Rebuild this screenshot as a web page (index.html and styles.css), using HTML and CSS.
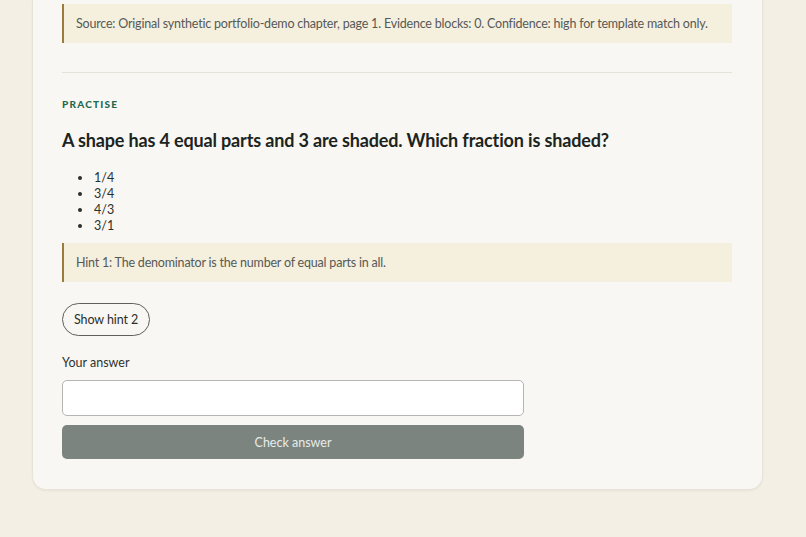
FILE: index.html
```html
<!DOCTYPE html>
<html lang="en">
<head>
<meta charset="utf-8">
<title>Practise</title>
<link rel="stylesheet" href="styles.css">
</head>
<body>
<main class="card">
  <div class="callout">Source: Original synthetic portfolio-demo chapter, page 1. Evidence blocks: 0. Confidence: high for template match only.</div>
  <hr class="divider">
  <section class="practise">
    <div class="eyebrow">PRACTISE</div>
    <h2 class="question">A shape has 4 equal parts and 3 are shaded. Which fraction is shaded?</h2>
    <ul class="options">
      <li>1/4</li>
      <li>3/4</li>
      <li>4/3</li>
      <li>3/1</li>
    </ul>
    <div class="callout hint">Hint 1: The denominator is the number of equal parts in all.</div>
    <button class="pill" type="button">Show hint 2</button>
    <label class="label" for="answer">Your answer</label>
    <input class="answer" id="answer" type="text">
    <button class="check" type="button">Check answer</button>
  </section>
</main>
</body>
</html>
```
FILE: styles.css
```css
* { box-sizing: border-box; }
html, body { margin: 0; padding: 0; }
body {
  background: #f3efe5;
  font-family: Lato, "Noto Sans", sans-serif;
  color: #1d2421;
  height: 537px;
  overflow: hidden;
}
.card {
  width: 731px;
  margin-left: 32px;
  background: #f9f7f3;
  border: 1px solid #e8e3d8;
  border-top: none;
  border-radius: 0 0 14px 14px;
  padding: 4px 30px 30px 29px;
  box-shadow: 0 1px 2px rgba(120, 100, 60, 0.08);
}
.callout {
  background: #f5efde;
  border-left: 2px solid #9c7b3e;
  padding: 10px 12px;
  font-size: 12.5px;
  letter-spacing: -0.2px;
  line-height: 19px;
  color: #565a57;
  white-space: nowrap;
}
.divider {
  border: none;
  border-top: 1px solid #e6e2da;
  margin: 29px 0 25px;
}
.eyebrow {
  font-size: 10px;
  font-weight: 900;
  letter-spacing: 1.2px;
  color: #1f6b50;
  line-height: 12px;
}
.question {
  font-size: 18px;
  letter-spacing: -0.15px;
  font-weight: 700;
  line-height: 26px;
  margin: 17px 0 17px;
  color: #1b2420;
}
.options {
  margin: 0 0 9px;
  padding-left: 31px;
  font-size: 12.5px;
  line-height: 16px;
  color: #2a2f2c;
}
.options li { padding-left: 1px; }
.hint { margin-bottom: 21px; }
.pill {
  display: block;
  font: inherit;
  font-size: 12.5px;
  letter-spacing: -0.1px;
  color: #2a2f2c;
  background: transparent;
  border: 1px solid #5d605d;
  border-radius: 999px;
  height: 33px;
  padding: 0 11px;
  margin-bottom: 18px;
}
.label {
  display: block;
  font-size: 12.5px;
  line-height: 18px;
  color: #2e322f;
  margin-bottom: 8px;
}
.answer {
  display: block;
  width: 462px;
  height: 36px;
  border: 1px solid #b5b5b3;
  border-radius: 5px;
  background: #fff;
  margin-bottom: 9px;
}
.check {
  display: block;
  width: 462px;
  height: 34px;
  border: none;
  border-radius: 5px;
  background: #7b847e;
  color: #e8ece8;
  font: inherit;
  font-size: 12.5px;
}
```
